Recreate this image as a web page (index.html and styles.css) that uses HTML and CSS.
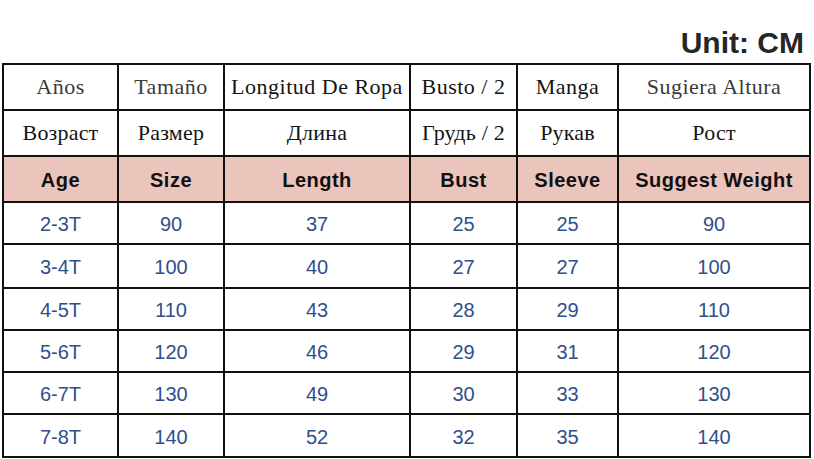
FILE: index.html
```html
<!DOCTYPE html>
<html>
<head>
<meta charset="utf-8">
<link rel="stylesheet" href="styles.css">
</head>
<body>
<div class="page">
  <div class="title"><span>Unit: CM</span></div>
  <table class="chart">
    <colgroup>
      <col class="c1"><col class="c2"><col class="c3"><col class="c4"><col class="c5"><col class="c6">
    </colgroup>
    <tr class="es">
      <td class="grey">Años</td><td class="grey">Tamaño</td><td>Longitud De Ropa</td><td>Busto / 2</td><td>Manga</td><td class="grey">Sugiera Altura</td>
    </tr>
    <tr class="ru">
      <td>Возраст</td><td>Размер</td><td>Длина</td><td>Грудь / 2</td><td>Рукав</td><td>Рост</td>
    </tr>
    <tr class="en">
      <td>Age</td><td>Size</td><td>Length</td><td>Bust</td><td>Sleeve</td><td>Suggest Weight</td>
    </tr>
    <tr class="d r1"><td>2-3T</td><td>90</td><td>37</td><td>25</td><td>25</td><td>90</td></tr>
    <tr class="d r2"><td>3-4T</td><td>100</td><td>40</td><td>27</td><td>27</td><td>100</td></tr>
    <tr class="d r1"><td>4-5T</td><td>110</td><td>43</td><td>28</td><td>29</td><td>110</td></tr>
    <tr class="d r1"><td>5-6T</td><td>120</td><td>46</td><td>29</td><td>31</td><td>120</td></tr>
    <tr class="d r1"><td>6-7T</td><td>130</td><td>49</td><td>30</td><td>33</td><td>130</td></tr>
    <tr class="d r3"><td>7-8T</td><td>140</td><td>52</td><td>32</td><td>35</td><td>140</td></tr>
  </table>
</div>
</body>
</html>
```
FILE: styles.css
```css
html, body {
  margin: 0;
  padding: 0;
  background: #ffffff;
}
body {
  width: 814px;
  height: 459px;
  overflow: hidden;
}
.page {
  padding-left: 2px;
}
.title {
  height: 63px;
  display: flex;
  justify-content: flex-end;
  align-items: flex-end;
  padding-right: 10px;
  box-sizing: border-box;
}
.title span {
  font-family: "Liberation Sans", Arial, sans-serif;
  font-weight: bold;
  font-size: 30px;
  line-height: 30px;
  color: #262626;
  margin-bottom: 5px;
}
.chart {
  border-collapse: collapse;
  table-layout: fixed;
  width: 809px;
}
.c1 { width: 115px; }
.c2 { width: 106px; }
.c3 { width: 186px; }
.c4 { width: 107px; }
.c5 { width: 101px; }
.c6 { width: 192px; }
.chart td {
  border: 2px solid #111;
  text-align: center;
  padding: 0;
  white-space: nowrap;
  overflow: hidden;
}
.es td, .ru td {
  font-family: "Liberation Serif", "Times New Roman", serif;
  font-size: 22px;
  letter-spacing: 0.5px;
  color: #141414;
  height: 44px;
}
.ru td {
  letter-spacing: 0.2px;
}
.es td.grey {
  color: #3a3a3a;
}
.en td {
  background: #ebc4bb;
  font-family: "Liberation Sans", Arial, sans-serif;
  font-weight: bold;
  font-size: 20px;
  letter-spacing: 0.5px;
  color: #111;
  height: 42px;
  padding-top: 2px;
}
.d td {
  font-family: "Liberation Sans", Arial, sans-serif;
  font-size: 20px;
  color: #2f4f8c;
  height: 37px;
  padding-top: 3px;
}
.d.r2 td { height: 39px; }
.d.r3 td { height: 38px; }
```
